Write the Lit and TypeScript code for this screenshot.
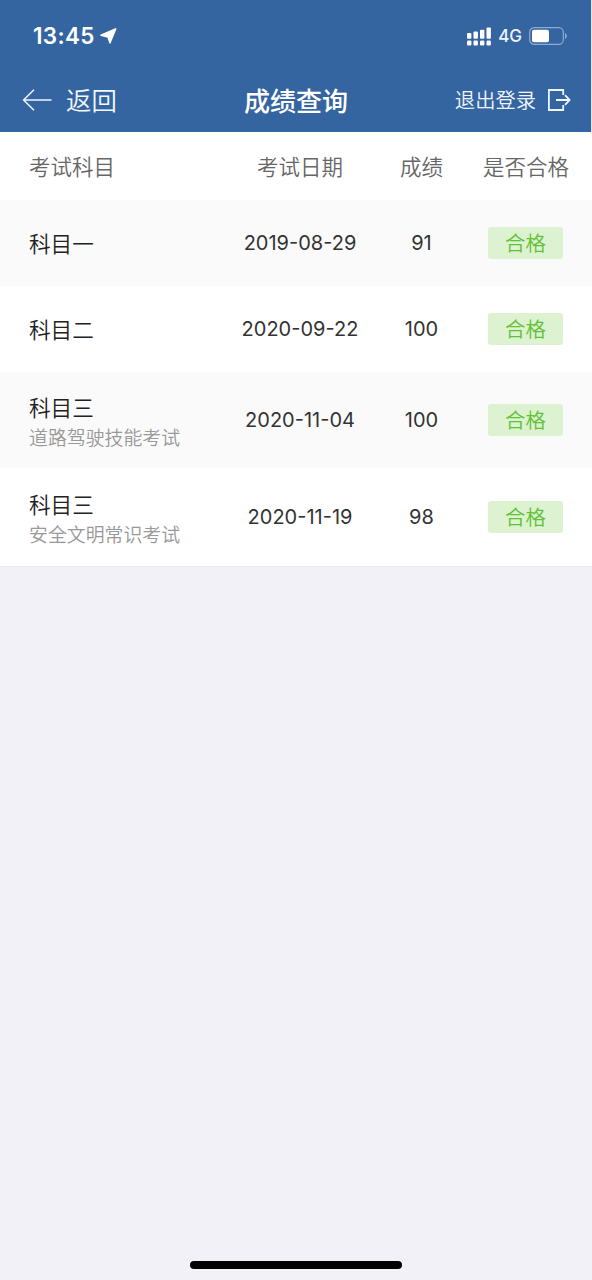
import { LitElement, html, css, nothing } from "lit";
import { customElement } from "lit/decorators.js";

interface Exam {
  subject: string;
  detail?: string;
  date: string;
  score: number;
}

const EXAMS: Exam[] = [
  { subject: "科目一", date: "2019-08-29", score: 91 },
  { subject: "科目二", date: "2020-09-22", score: 100 },
  { subject: "科目三", detail: "道路驾驶技能考试", date: "2020-11-04", score: 100 },
  { subject: "科目三", detail: "安全文明常识考试", date: "2020-11-19", score: 98 },
];

@customElement("status-bar")
class StatusBar extends LitElement {
  static styles = css`
    :host {
      display: flex;
      align-items: center;
      justify-content: space-between;
      height: 70px;
      box-sizing: border-box;
      padding: 2px 23px 0 33px;
      color: #fff;
    }
    .left, .right { display: flex; align-items: center; }
    .time { font-size: 22.4px; font-weight: 580; line-height: 28px; letter-spacing: 0.4px; }
    .arrow { margin-left: 5px; }
    .net { font-size: 17px; font-weight: 500; line-height: 24px; margin: 0 7px 0 7px; color: #edf4fc; }
    svg { display: block; }
  `;
  render() {
    return html`
      <div class="left">
        <span class="time">13:45</span>
        <svg class="arrow" width="17" height="16" viewBox="0 0 17 16">
          <path d="M15.6.9 10 14.8 8 9 1 7.2Z" fill="#fff" stroke="#fff" stroke-width="1.6" stroke-linejoin="round" />
        </svg>
      </div>
      <div class="right">
        <svg width="24" height="20" viewBox="0 0 24 20" fill="#fff">
          <rect x="0" y="7" width="4.4" height="5.8" rx="1" />
          <rect x="6.5" y="5.4" width="4.4" height="7.4" rx="1" />
          <rect x="13" y="3.8" width="4.4" height="9" rx="1" />
          <rect x="19.5" y="1.4" width="4.4" height="11.4" rx="1" />
          <rect x="0" y="14.6" width="4.4" height="4.8" rx="1.2" />
          <rect x="6.5" y="14.6" width="4.4" height="4.8" rx="1.2" />
          <rect x="13" y="14.6" width="4.4" height="4.8" rx="1.2" />
          <rect x="19.5" y="14.6" width="4.4" height="4.8" rx="1.2" />
        </svg>
        <span class="net">4G</span>
        <svg width="39" height="18" viewBox="0 0 39 18">
          <rect x=".7" y=".7" width="33.6" height="16.6" rx="4.6" fill="none" stroke="#8fabcf" stroke-width="1.2" />
          <rect x="3" y="2.8" width="17" height="12.4" rx="2" fill="#fff" />
          <path d="M36 6c2.4.7 2.4 5.3 0 6Z" fill="#8fabcf" />
        </svg>
      </div>
    `;
  }
}

@customElement("nav-bar")
class NavBar extends LitElement {
  static styles = css`
    :host {
      display: grid;
      grid-template-columns: 1fr auto 1fr;
      align-items: center;
      height: 62px;
      box-sizing: border-box;
      padding: 0 20px 0 22px;
      color: #fff;
    }
    .back, .logout { display: flex; align-items: center; white-space: nowrap; }
    .logout { justify-content: flex-end; font-size: 20.3px; color: #eef5ff; font-weight: 350; }
    .back { font-size: 25.4px; gap: 14px; color: #f3f8ff; font-weight: 350; }
    .title { font-size: 26px; font-weight: 500; padding: 1px 1px 0 0; }
    .logout svg { margin-left: 11px; }
    svg { display: block; margin-bottom: 2px; }
    span { line-height: 36px; }
  `;
  render() {
    return html`
      <div class="back">
        <svg width="30" height="22" viewBox="0 0 30 22" fill="none" stroke="#eef5ff" stroke-width="1.5">
          <path d="M12 .8 1.6 11 12 21.2M1.6 11H29.5" />
        </svg>
        <span>返回</span>
      </div>
      <span class="title">成绩查询</span>
      <div class="logout">
        <span>退出登录</span>
        <svg width="24" height="24" viewBox="0 0 24 24" fill="none" stroke="#eef5ff" stroke-width="1.8">
          <path d="M16.2 7V2H1.9V22H16.2V17M9 12H22.4M18 7.2 22.6 12 18 16.8" />
        </svg>
      </div>
    `;
  }
}

@customElement("score-table")
class ScoreTable extends LitElement {
  static styles = css`
    :host { display: block; background: #fff; }
    .row {
      display: grid;
      grid-template-columns: 200px 142px 101px 107px;
      align-items: center;
      height: 86px;
      padding-left: 29px;
      color: #333;
      font-size: 20px;
    }
    .row:nth-child(even) { background: #fafafa; }
    .row.tall { height: 96px; }
    .row.tall:last-child { height: 98px; }
    .row.head { height: 68px; font-size: 21.5px; color: #666; font-weight: 350; }
    .cell { text-align: center; white-space: nowrap; line-height: 30px; }
    .head .cell { padding-top: 1px; }
    .head .cell:last-child { padding-left: 1px; }
    .cell.first { text-align: left; padding-top: 1px; font-weight: 350; }
    .tall .cell.first { padding-top: 9px; }
    .name { font-size: 21.6px; line-height: 30px; color: #222; }
    .tall .name { line-height: 29px; }
    .detail { font-size: 18.9px; line-height: 32px; color: #999; }
    .badge {
      display: inline-block;
      width: 75px;
      height: 32px;
      border-radius: 3px;
      background: #dcf2d0;
      color: #5fc133;
      font-size: 20.4px;
      line-height: 34px;
      vertical-align: middle;
      font-weight: 350;
    }
  `;
  render() {
    return html`
      <div class="row head">
        <div class="cell first">考试科目</div>
        <div class="cell">考试日期</div>
        <div class="cell">成绩</div>
        <div class="cell">是否合格</div>
      </div>
      ${EXAMS.map(
        (e) => html`<div class="row ${e.detail ? "tall" : ""}">
          <div class="cell first">
            <div class="name">${e.subject}</div>
            ${e.detail ? html`<div class="detail">${e.detail}</div>` : nothing}
          </div>
          <div class="cell">${e.date}</div>
          <div class="cell">${e.score}</div>
          <div class="cell"><span class="badge">合格</span></div>
        </div>`,
      )}
    `;
  }
}

@customElement("app-root")
class AppRoot extends LitElement {
  static styles = css`
    :host {
      display: flex;
      flex-direction: column;
      height: 1280px;
      background: #f2f1f7;
      font-family: Inter, "Noto Sans CJK SC", sans-serif;
      overflow: hidden;
    }
    .top { background: #3565a0; height: 132px; box-sizing: border-box; border-right: 1px solid #dfe6f0; }
    .list { border-bottom: 1px solid #e9e8ee; height: 435px; box-sizing: border-box; }
    .foot { margin-top: auto; display: flex; justify-content: center; padding-bottom: 11px; }
    .indicator { width: 212px; height: 8px; border-radius: 4px; background: #000; }
  `;
  render() {
    return html`
      <div class="top">
        <status-bar></status-bar>
        <nav-bar></nav-bar>
      </div>
      <score-table class="list"></score-table>
      <div class="foot"><div class="indicator"></div></div>
    `;
  }
}
